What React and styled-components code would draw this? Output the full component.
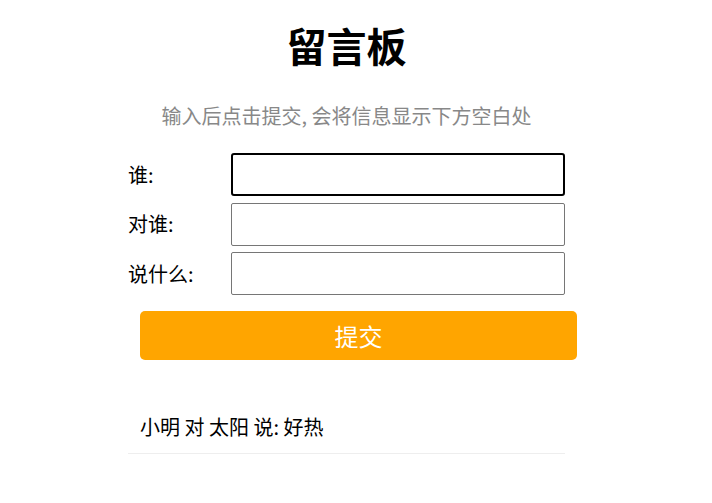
import React from 'react';
import styled, { createGlobalStyle } from 'styled-components';

const GlobalStyle = createGlobalStyle`
  body {
    margin: 0;
    background: #fff;
    font-family: "Noto Sans CJK SC", "Noto Sans", sans-serif;
    color: #000;
  }
`;

const Page = styled.div`
  width: 456px;
  margin: 0 auto;
  padding-top: 21px;
`;

const Inner = styled.div`
  width: 437px;
`;

const Title = styled.h1`
  margin: 0;
  font-size: 40px;
  line-height: 48px;
  font-weight: 700;
  text-align: center;
`;

const Hint = styled.p`
  margin: 33px 0 0;
  font-size: 20px;
  line-height: 28px;
  color: #888;
  text-align: center;
`;

const Form = styled.form`
  display: flex;
  flex-direction: column;
  gap: 6.5px;
  margin-top: 23px;
`;

const Row = styled.div`
  display: grid;
  grid-template-columns: 103px 334px;
  align-items: center;
  height: 43px;
`;

const Label = styled.label`
  font-size: 20px;
  line-height: 28px;
`;

const Input = styled.input`
  box-sizing: border-box;
  width: 334px;
  height: 43px;
  border: ${p => (p.$active ? '2px solid #000' : '1px solid #767676')};
  border-radius: ${p => (p.$active ? '3px' : '2px')};
  padding: 0 8px;
  font-size: 18px;
  font-family: inherit;
  outline: none;
  background: #fff;
`;

const Submit = styled.button`
  display: block;
  box-sizing: border-box;
  width: 437px;
  height: 49px;
  margin: 16px 0 0 12px;
  border: none;
  border-radius: 5px;
  background: #ffa500;
  color: #fff;
  font-size: 24px;
  font-family: inherit;
  cursor: pointer;
`;

const List = styled.ul`
  list-style: none;
  margin: 41px 0 0;
  padding: 0;
`;

const Item = styled.li`
  padding: 13px 12px;
  font-size: 20px;
  line-height: 26px;
  border-bottom: 1px solid #eee;
`;

const fields = [
  { id: 'who', label: '谁:' },
  { id: 'to', label: '对谁:' },
  { id: 'say', label: '说什么:' },
];

const messages = [{ who: '小明', to: '太阳', say: '好热' }];

export default function App() {
  return (
    <>
      <GlobalStyle />
      <Page>
        <Inner>
          <Title>留言板</Title>
          <Hint>输入后点击提交, 会将信息显示下方空白处</Hint>
          <Form onSubmit={e => e.preventDefault()}>
            {fields.map((f, i) => (
              <Row key={f.id}>
                <Label htmlFor={f.id}>{f.label}</Label>
                <Input id={f.id} type="text" $active={i === 0} />
              </Row>
            ))}
          </Form>
        </Inner>
        <Submit type="button">提交</Submit>
        <Inner>
          <List>
            {messages.map((m, i) => (
              <Item key={i}>
                {m.who} 对 {m.to} 说: {m.say}
              </Item>
            ))}
          </List>
        </Inner>
      </Page>
    </>
  );
}
